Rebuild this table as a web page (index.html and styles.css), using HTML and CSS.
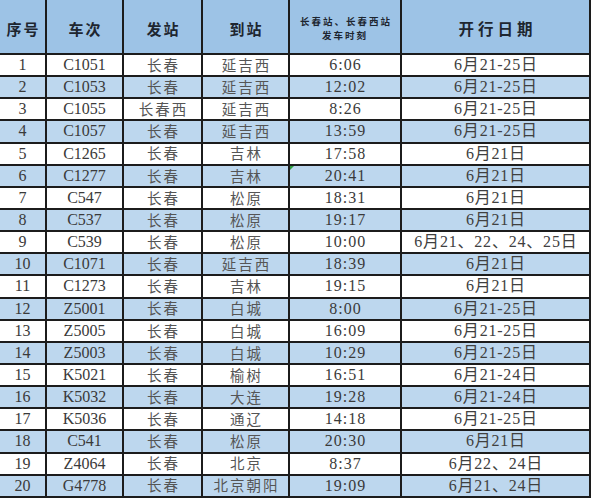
FILE: index.html
```html
<!DOCTYPE html>
<html lang="zh">
<head>
<meta charset="utf-8">
<title>长春站发车时刻</title>
<link rel="stylesheet" href="styles.css">
</head>
<body>
<div class="sheet">
  <div class="row head">
    <div class="c h">序号</div><div class="c h">车次</div><div class="c h">发站</div><div class="c h">到站</div><div class="c hs">长春站、长春西站<br>发车时刻</div><div class="c h hl">开行日期</div>
  </div>
  <div class="row"><div class="c n">1</div><div class="c n">C1051</div><div class="c z">长春</div><div class="c z">延吉西</div><div class="c t">6:06</div><div class="c d">6月21-25日</div></div>
  <div class="row alt"><div class="c n">2</div><div class="c n">C1053</div><div class="c z">长春</div><div class="c z">延吉西</div><div class="c t">12:02</div><div class="c d">6月21-25日</div></div>
  <div class="row"><div class="c n">3</div><div class="c n">C1055</div><div class="c z">长春西</div><div class="c z">延吉西</div><div class="c t">8:26</div><div class="c d">6月21-25日</div></div>
  <div class="row alt"><div class="c n">4</div><div class="c n">C1057</div><div class="c z">长春</div><div class="c z">延吉西</div><div class="c t">13:59</div><div class="c d">6月21-25日</div></div>
  <div class="row"><div class="c n">5</div><div class="c n">C1265</div><div class="c z">长春</div><div class="c z">吉林</div><div class="c t">17:58</div><div class="c d">6月21日</div></div>
  <div class="row alt"><div class="c n">6</div><div class="c n">C1277</div><div class="c z">长春</div><div class="c z">吉林</div><div class="c t mark">20:41</div><div class="c d">6月21日</div></div>
  <div class="row"><div class="c n">7</div><div class="c n">C547</div><div class="c z">长春</div><div class="c z">松原</div><div class="c t">18:31</div><div class="c d">6月21日</div></div>
  <div class="row alt"><div class="c n">8</div><div class="c n">C537</div><div class="c z">长春</div><div class="c z">松原</div><div class="c t">19:17</div><div class="c d">6月21日</div></div>
  <div class="row"><div class="c n">9</div><div class="c n">C539</div><div class="c z">长春</div><div class="c z">松原</div><div class="c t">10:00</div><div class="c d">6月21、22、24、25日</div></div>
  <div class="row alt"><div class="c n">10</div><div class="c n">C1071</div><div class="c z">长春</div><div class="c z">延吉西</div><div class="c t">18:39</div><div class="c d">6月21日</div></div>
  <div class="row"><div class="c n">11</div><div class="c n">C1273</div><div class="c z">长春</div><div class="c z">吉林</div><div class="c t">19:15</div><div class="c d">6月21日</div></div>
  <div class="row alt"><div class="c n">12</div><div class="c n">Z5001</div><div class="c z">长春</div><div class="c z">白城</div><div class="c t">8:00</div><div class="c d">6月21-25日</div></div>
  <div class="row"><div class="c n">13</div><div class="c n">Z5005</div><div class="c z">长春</div><div class="c z">白城</div><div class="c t">16:09</div><div class="c d">6月21-25日</div></div>
  <div class="row alt"><div class="c n">14</div><div class="c n">Z5003</div><div class="c z">长春</div><div class="c z">白城</div><div class="c t">10:29</div><div class="c d">6月21-25日</div></div>
  <div class="row"><div class="c n">15</div><div class="c n">K5021</div><div class="c z">长春</div><div class="c z">榆树</div><div class="c t">16:51</div><div class="c d">6月21-24日</div></div>
  <div class="row alt"><div class="c n">16</div><div class="c n">K5032</div><div class="c z">长春</div><div class="c z">大连</div><div class="c t">19:28</div><div class="c d">6月21-24日</div></div>
  <div class="row"><div class="c n">17</div><div class="c n">K5036</div><div class="c z">长春</div><div class="c z">通辽</div><div class="c t">14:18</div><div class="c d">6月21-25日</div></div>
  <div class="row alt"><div class="c n">18</div><div class="c n">C541</div><div class="c z">长春</div><div class="c z">松原</div><div class="c t">20:30</div><div class="c d">6月21日</div></div>
  <div class="row"><div class="c n">19</div><div class="c n">Z4064</div><div class="c z">长春</div><div class="c z">北京</div><div class="c t">8:37</div><div class="c d">6月22、24日</div></div>
  <div class="row alt"><div class="c n">20</div><div class="c n">G4778</div><div class="c z">长春</div><div class="c z">北京朝阳</div><div class="c t">19:09</div><div class="c d">6月21、24日</div></div>
</div>
</body>
</html>
```
FILE: styles.css
```css
html, body {
  margin: 0;
  padding: 0;
  background: #ffffff;
}

.sheet {
  width: 591px;
  display: grid;
  grid-template-columns: 45px 75px 77px 85px 110px 187px;
  grid-template-rows: 53px repeat(20, 20.15px);
  column-gap: 2px;
  row-gap: 2px;
  padding: 0 2px 2px 0;
  box-sizing: border-box;
  background: #1c1c1c;
  font-family: "Liberation Serif", "Noto Sans CJK SC", serif;
  color: #3a3a3a;
}

.row {
  display: contents;
}

.c {
  display: flex;
  align-items: center;
  justify-content: center;
  background: #ffffff;
  font-size: 16px;
  line-height: 1;
  white-space: nowrap;
  position: relative;
}

.alt > .c {
  background: #bdd7ee;
}

.head > .c {
  background: #9dc3e6;
  color: #1e2630;
}

.h {
  font-family: "Noto Sans CJK SC", sans-serif;
  font-weight: 700;
  font-size: 15px;
  letter-spacing: 2px;
  text-indent: 2px;
  padding-top: 4px;
}

.hl {
  font-size: 15.5px;
  letter-spacing: 4px;
  text-indent: 4px;
}

.hs {
  font-family: "Noto Sans CJK SC", sans-serif;
  font-weight: 700;
  font-size: 9.5px;
  letter-spacing: 2px;
  text-indent: 2px;
  line-height: 14px;
  text-align: center;
  color: #2e3338;
  white-space: normal;
  padding-top: 2px;
}

.z {
  font-family: "Noto Sans CJK SC", sans-serif;
  font-size: 14.5px;
  letter-spacing: 2px;
  text-indent: 2px;
  color: #555555;
}

.n {
  font-size: 16px;
}

.t {
  font-size: 16px;
  letter-spacing: 1px;
  text-indent: 1px;
}

.d {
  font-size: 16px;
  letter-spacing: 0.8px;
  text-indent: 0.8px;
  color: #404040;
}

.mark::before {
  content: "";
  position: absolute;
  left: 0;
  top: 0;
  border-top: 4px solid #2e9e3e;
  border-right: 4px solid transparent;
}
```
